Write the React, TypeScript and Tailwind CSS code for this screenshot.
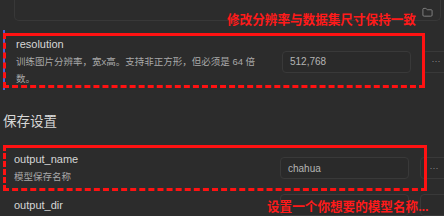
import { Folder } from "lucide-react";

const font = "font-['Liberation_Sans','Noto_Sans_CJK_SC',sans-serif]";

type RowProps = {
  name: string;
  desc?: string;
  value?: string;
  active?: boolean;
  dots?: boolean;
  className?: string;
};

const SettingRow = ({ name, desc, value, active, dots = true, className }: RowProps) => {
  return (
    <div
      className={`relative flex items-center ml-[3px] pl-[11px] ${
        active ? "border-l-2 border-[#4b5fd6] pl-[9px]" : ""
      } ${className ?? ""}`}
    >
      <div className="w-[245px] shrink-0">
        <div className="text-[11px] leading-[17px] text-[#d6d6d6]">{name}</div>
        {desc && (
          <div className="text-[9.5px] leading-[17px] text-[#a9a9a9]">{desc}</div>
        )}
      </div>
      <div className="ml-[21px] flex items-center">
        <div className="w-[129px] h-[22px] rounded-[4px] border border-[#393939] bg-[#2a2a2a] px-[7px] flex items-center text-[10px] text-[#b4b4b4]">
          {value}
        </div>
        <div className="ml-[11px] w-[28px] h-[22px] rounded-[4px] border border-[#393939] bg-[#2b2b2b] flex items-center justify-center text-[9px] leading-none text-[#8a8a8a]">
          {dots ? "···" : ""}
        </div>
      </div>
    </div>
  );
};

const RedBox = ({ className }: { className: string }) => (
  <div
    className={`absolute pointer-events-none border-[3px] border-[#ff1212] [border-bottom-style:dashed] [border-left-style:dashed] ${className}`}
  />
);

const App = () => {
  return (
    <div className={`relative w-[444px] h-[216px] overflow-hidden bg-[#2c2c2c] ${font}`}>
      {/* top of the previous card */}
      <div className="ml-[14px] mr-[3px] h-[21px] border border-t-0 border-[#383838] rounded-b-[5px] flex justify-end items-start pt-[7px] pr-[7px]">
        <Folder size={11} className="text-[#9c9c9c]" strokeWidth={1.6} />
      </div>

      <SettingRow
        active
        className="mt-[9px] pt-[6px] pb-[3px]"
        name="resolution"
        desc="训练图片分辨率，宽x高。支持非正方形，但必须是 64 倍数。"
        value="512,768"
      />

      <div className="mt-[22px] ml-[3px] text-[13.5px] leading-[20px] text-[#d8d8d8]">
        保存设置
      </div>

      <SettingRow
        className="mt-[10px] py-[9px]"
        name="output_name"
        desc="模型保存名称"
        value="chahua"
      />

      <SettingRow className="pt-0" name="output_dir" value="" dots={false} />

      {/* annotations */}
      <RedBox className="left-[3px] top-[33px] w-[422px] h-[55px]" />
      <RedBox className="left-[3px] top-[145px] w-[424px] h-[46px]" />

      <div className="absolute left-[227px] top-[12px] text-[12.6px] leading-[17px] font-bold text-[#ff1a1a]">
        修改分辨率与数据集尺寸保持一致
      </div>
      <div className="absolute left-[267px] top-[199px] text-[12.6px] leading-[17px] font-bold text-[#ff1a1a]">
        设置一个你想要的模型名称...
      </div>
    </div>
  );
};

export default App;
